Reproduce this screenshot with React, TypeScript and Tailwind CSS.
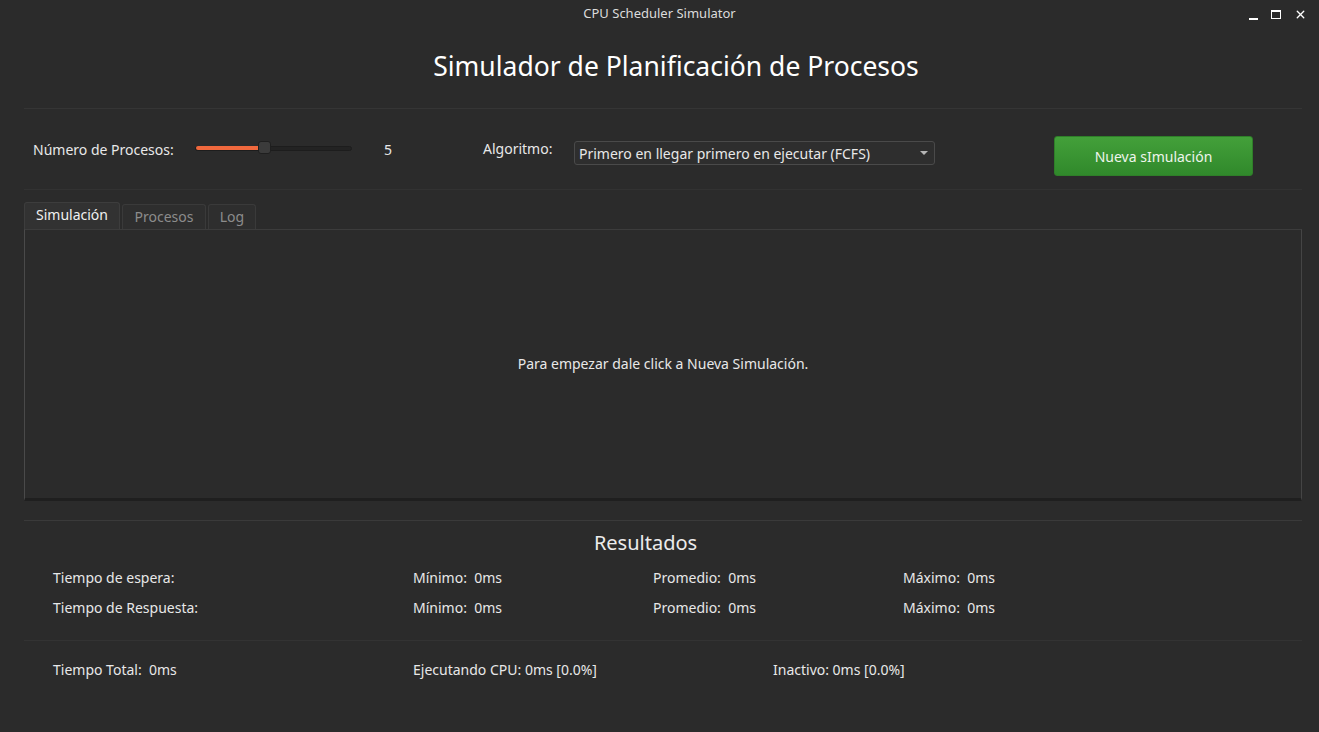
import { X } from 'lucide-react';

const stats = [
  { label: 'Tiempo de espera:' },
  { label: 'Tiempo de Respuesta:' },
];

export default function App() {
  return (
    <div
      className="w-[1319px] h-[732px] bg-[#2b2b2b] text-[#e8e8e8] flex flex-col overflow-hidden"
      style={{ fontFamily: '"Noto Sans", "Open Sans", sans-serif' }}
    >
      {/* Title bar */}
      <div className="relative h-[28px] flex items-center justify-center text-[13px] text-[#dcdcdc]">
        <span>CPU Scheduler Simulator</span>
        <div className="absolute right-[12px] top-[7px] flex items-center gap-[13px]">
          <div className="w-[9px] h-[14px] flex items-end pb-[1px]">
            <div className="w-[9px] h-[2px] bg-white" />
          </div>
          <div className="w-[10px] h-[9px] border-[1.5px] border-t-[2.5px] border-white" />
          <X className="w-[13px] h-[13px] text-white" strokeWidth={2.5} />
        </div>
      </div>

      {/* Heading */}
      <div className="h-[80px] flex items-center justify-center pl-[33px]">
        <h1 className="text-[26.5px] text-white leading-none pb-[4px]">Simulador de Planificación de Procesos</h1>
      </div>
      <div className="ml-[24px] mr-[17px] h-px bg-[#353535]" />

      {/* Controls */}
      <div className="h-[80px] flex items-start text-[14px] pl-[33px]">
        <span className="w-[162px] mt-[30px]">Número de Procesos:</span>
        <div className="relative mt-[37px] w-[157px] h-[5px] rounded-full bg-[#232323] border border-[#1d1d1d]">
          <div className="absolute left-0 top-[-1px] h-[4px] w-[64px] rounded-l-full bg-[#f0683d]" />
          <div className="absolute left-[62px] top-[-6px] w-[13px] h-[13px] rounded-[3px] bg-[#3b3b3b] border border-[#1f1f1f]" />
        </div>
        <span className="ml-[32px] w-[99px] mt-[30px]">5</span>
        <span className="w-[91px] mt-[29px]">Algoritmo:</span>
        <div className="w-[361px] h-[24px] mt-[32px] flex items-center justify-between pl-[4px] pr-[6px] rounded-[3px] bg-[#2e2e2e] border border-[#4a4a4a] text-[14px]">
          <span>Primero en llegar primero en ejecutar (FCFS)</span>
          <span className="w-0 h-0 border-l-[4px] border-r-[4px] border-t-[4px] border-l-transparent border-r-transparent border-t-[#b5b5b5]" />
        </div>
        <button className="ml-[119px] mt-[27px] w-[199px] h-[40px] rounded-[3px] border border-[#2f7f29] bg-gradient-to-b from-[#43a03a] to-[#30892b] text-[#eef5ec] text-[14px]">
          Nueva sImulación
        </button>
      </div>
      <div className="ml-[24px] mr-[17px] h-px bg-[#323232]" />

      {/* Tabs */}
      <div className="ml-[24px] mr-[17px] mt-[12px] flex items-end gap-[2px] text-[14px]">
        <div className="h-[27px] w-[96px] flex items-center justify-center pb-[3px] rounded-t-[3px] bg-[#323232] border border-b-0 border-[#3d3d3d] text-[#f0f0f0]">
          Simulación
        </div>
        <div className="h-[25px] w-[84px] flex items-center justify-center pb-[2px] rounded-t-[3px] bg-[#2e2e2e] border border-b-0 border-[#3a3a3a] text-[#8c8c8c]">
          Procesos
        </div>
        <div className="h-[25px] w-[48px] flex items-center justify-center pb-[2px] rounded-t-[3px] bg-[#2e2e2e] border border-b-0 border-[#3a3a3a] text-[#8c8c8c]">
          Log
        </div>
      </div>
      <div className="ml-[24px] mr-[17px] h-[272px] flex items-center justify-center border border-[#1f1f1f] border-l-[#4a4a4a] border-t-[#3c3c3c] border-r-[#454545] border-b-[3px] text-[14px]">
        <span className="-mt-[1px]">Para empezar dale click a Nueva Simulación.</span>
      </div>

      <div className="ml-[24px] mr-[17px] mt-[19px] h-px bg-[#3a3a3a]" />

      {/* Results */}
      <div className="h-[44px] flex items-center justify-center pr-[28px] text-[20px] text-[#ececec]">
        <span className="pb-[1px]">Resultados</span>
      </div>
      <div className="flex flex-col text-[14px] pl-[53px] -mt-[3px]">
        {stats.map((s) => (
          <div key={s.label} className="h-[30px] flex items-center">
            <span className="w-[360px]">{s.label}</span>
            <span className="w-[240px]">Mínimo:&nbsp; 0ms</span>
            <span className="w-[250px]">Promedio:&nbsp; 0ms</span>
            <span>Máximo:&nbsp; 0ms</span>
          </div>
        ))}
      </div>
      <div className="ml-[24px] mr-[17px] mt-[18px] h-px bg-[#333333]" />
      <div className="h-[56px] flex items-center text-[14px] pl-[53px]">
        <span className="w-[360px]">Tiempo Total:&nbsp; 0ms</span>
        <span className="w-[360px]">Ejecutando CPU: 0ms [0.0%]</span>
        <span>Inactivo: 0ms [0.0%]</span>
      </div>
    </div>
  );
}
